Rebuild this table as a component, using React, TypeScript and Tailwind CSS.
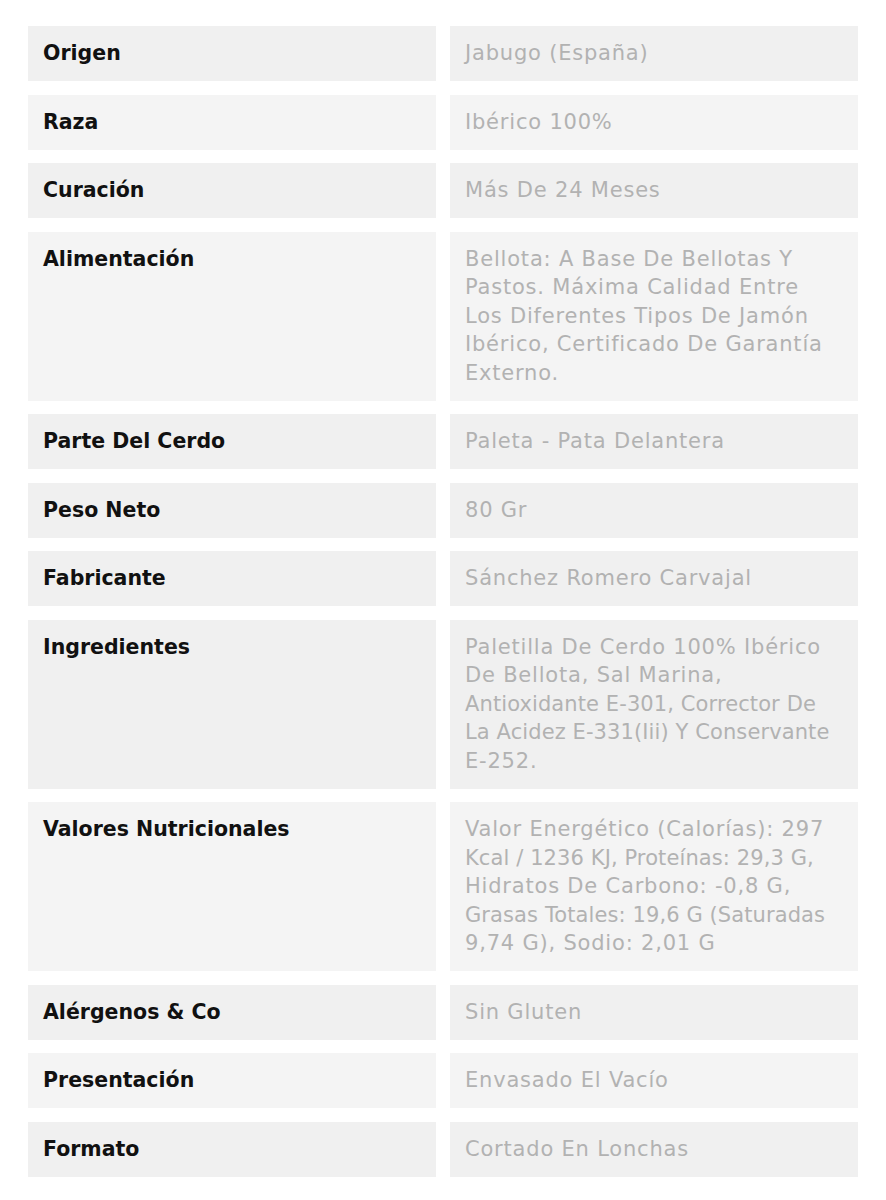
type Line = string | { text: string; tight: true };

const rows: { label: string; lines: Line[]; light?: boolean }[] = [
  { label: "Origen", lines: ["Jabugo (España)"] },
  { label: "Raza", lines: ["Ibérico 100%"], light: true },
  { label: "Curación", lines: ["Más De 24 Meses"] },
  {
    label: "Alimentación",
    lines: [
      "Bellota: A Base De Bellotas Y",
      "Pastos. Máxima Calidad Entre",
      "Los Diferentes Tipos De Jamón",
      "Ibérico, Certificado De Garantía",
      "Externo.",
    ],
    light: true,
  },
  { label: "Parte Del Cerdo", lines: ["Paleta - Pata Delantera"] },
  { label: "Peso Neto", lines: ["80 Gr"] },
  { label: "Fabricante", lines: ["Sánchez Romero Carvajal"] },
  {
    label: "Ingredientes",
    lines: [
      "Paletilla De Cerdo 100% Ibérico",
      "De Bellota, Sal Marina,",
      { text: "Antioxidante E-301, Corrector De", tight: true },
      { text: "La Acidez E-331(Iii) Y Conservante", tight: true },
      "E-252.",
    ],
  },
  {
    label: "Valores Nutricionales",
    lines: [
      "Valor Energético (Calorías): 297",
      { text: "Kcal / 1236 KJ, Proteínas: 29,3 G,", tight: true },
      "Hidratos De Carbono: -0,8 G,",
      { text: "Grasas Totales: 19,6 G (Saturadas", tight: true },
      "9,74 G), Sodio: 2,01 G",
    ],
    light: true,
  },
  { label: "Alérgenos & Co", lines: ["Sin Gluten"] },
  { label: "Presentación", lines: ["Envasado El Vacío"], light: true },
  { label: "Formato", lines: ["Cortado En Lonchas"] },
];

export default function App() {
  return (
    <div className="min-h-screen bg-white pt-[26px] px-[28px] font-['DejaVu_Sans',sans-serif]">
      <div className="flex flex-col gap-[13.5px] w-[830px]">
        {rows.map((row) => (
          <div key={row.label} className="grid grid-cols-2 gap-[14px]">
            {/* etiqueta */}
            <div
              className={`px-[15px] py-[13.25px] text-[20.5px] leading-[28.5px] font-bold text-[#111111] ${
                row.light ? "bg-[#f4f4f4]" : "bg-[#f0f0f0]"
              }`}
            >
              {row.label}
            </div>
            {/* valor: una línea por renglón, igual que la referencia */}
            <div
              className={`px-[15px] py-[13.25px] text-[21px] leading-[28.5px] text-[#b2b2b2] ${
                row.light ? "bg-[#f4f4f4]" : "bg-[#f0f0f0]"
              }`}
            >
              {row.lines.map((line, i) =>
                typeof line === "string" ? (
                  <span key={i} className="block whitespace-nowrap tracking-[0.8px]">
                    {line}
                  </span>
                ) : (
                  <span key={i} className="block whitespace-nowrap tracking-[0.1px]">
                    {line.text}
                  </span>
                )
              )}
            </div>
          </div>
        ))}
      </div>
    </div>
  );
}
